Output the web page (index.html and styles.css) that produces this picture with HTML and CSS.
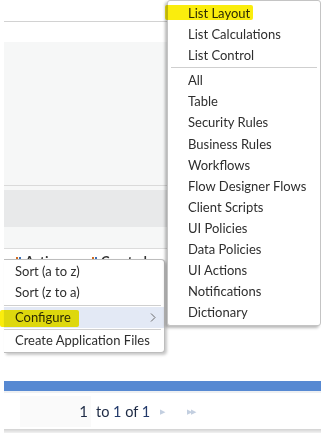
FILE: index.html
```html
<!DOCTYPE html>
<html>
<head>
<meta charset="utf-8">
<link rel="stylesheet" href="styles.css">
</head>
<body>
<div class="page">
  <div class="band top"></div>
  <div class="band gap"></div>
  <div class="band light tall"></div>
  <div class="band light thin"></div>
  <div class="band grey"></div>
  <div class="band light mid"></div>
  <div class="band heads">
    <span class="ico o"></span><span class="ico b"></span><span class="h1">Active</span>
    <span class="ico o2"></span><span class="ico b2"></span><span class="h2">Created</span>
  </div>
  <div class="band blank"></div>
  <div class="band blue"></div>
  <div class="footer">
    <div class="pagebox"><span class="cur">1</span></div>
    <span class="range">to <b>1</b> of <b>1</b></span>
    <span class="arr one">&#9654;</span>
    <span class="arr two">&#9654;&#9654;</span>
  </div>
  <div class="shadowline"></div>

  <ul class="menu ctx">
    <li>Sort (a to z)</li>
    <li>Sort (z to a)</li>
    <li class="sep"></li>
    <li class="active">Configure<svg class="chev" width="6" height="9" viewBox="0 0 6 9"><path d="M1 0.5 L5 4.5 L1 8.5" fill="none" stroke="#6b6b6b" stroke-width="1"/></svg></li>
    <li class="sep sep2"></li>
    <li>Create Application Files</li>
  </ul>

  <ul class="menu sub">
    <li>List Layout</li>
    <li>List Calculations</li>
    <li>List Control</li>
    <li class="sep"></li>
    <li>All</li>
    <li>Table</li>
    <li>Security Rules</li>
    <li>Business Rules</li>
    <li>Workflows</li>
    <li>Flow Designer Flows</li>
    <li>Client Scripts</li>
    <li>UI Policies</li>
    <li>Data Policies</li>
    <li>UI Actions</li>
    <li>Notifications</li>
    <li>Dictionary</li>
  </ul>

  <div class="mark m1"></div>
  <div class="mark m2"></div>
</div>
</body>
</html>
```

FILE: styles.css
```css
html, body {
  margin: 0;
  padding: 0;
  background: #fff;
}
body {
  width: 321px;
  height: 438px;
  overflow: hidden;
  font-family: Lato, "Open Sans", sans-serif;
  font-size: 13px;
  color: #2e2e2e;
}
.page {
  position: relative;
  height: 438px;
  margin-left: 4px;
  display: flex;
  flex-direction: column;
}
.band { flex: none; }
.top { height: 21px; border-bottom: 1px solid #d2d2d2; }
.gap { height: 20px; }
.light { background: #f6f7f7; }
.tall { height: 143px; border-bottom: 1px solid #dadada; }
.thin { height: 4px; }
.grey { height: 37px; background: #e8e9ea; }
.mid { height: 21px; border-bottom: 1px solid #dcdcdc; }
.heads {
  height: 10px;
  overflow: hidden;
  font-weight: bold;
  font-size: 13px;
  color: #333;
  display: flex;
  align-items: flex-start;
  padding-top: 4px;
  line-height: 16px;
  box-sizing: border-box;
}
.ico { display: inline-block; width: 2px; height: 4px; margin-top: 4px; }
.ico.o { background: #d06a1c; margin-left: 12px; }
.ico.b { background: #3d6fb6; margin-left: 1px; }
.h1 { margin-left: 4px; }
.ico.o2 { background: #d06a1c; margin-left: 30px; }
.ico.b2 { background: #3d6fb6; margin-left: 1px; }
.h2 { margin-left: 4px; }
.blank { height: 122px; }
.blue { height: 10px; background: #5789d2; border-bottom: 2px solid #eef0f2; }
.footer {
  height: 36px;
  display: flex;
  align-items: center;
  background: #fff;
}
.pagebox {
  width: 71px;
  height: 31px;
  margin-left: 16px;
  background: #fafafa;
  display: flex;
  align-items: center;
  justify-content: flex-end;
  padding-right: 3px;
  box-sizing: border-box;
}
.cur { font-size: 15px; color: #1d2a44; }
.range { margin-left: 5px; font-size: 14.5px; color: #1d2a44; }
.range b { font-weight: normal; color: #233a6b; }
.arr { color: #c3cfe0; font-size: 7px; }
.arr.one { margin-left: 10px; }
.arr.two { margin-left: 22px; letter-spacing: -1px; }
.shadowline {
  height: 4px;
  background: linear-gradient(#d2d2d2, #f2f2f2);
}

.menu {
  position: absolute;
  list-style: none;
  margin: 0;
  background: #fff;
  box-sizing: border-box;
}
.menu li {
  height: 21.1px;
  line-height: 21px;
  white-space: nowrap;
}
.menu li.sep {
  height: 1px;
  background: #cfcfcf;
  margin: 1px 3px 1px;
}
.ctx {
  left: 0;
  top: 259px;
  width: 161px;
  padding: 1px 0 1px;
  border: 1px solid #bdbdbd;
  border-left: none;
  border-radius: 0 4px 4px 0;
  box-shadow: 2px 2px 3px rgba(0,0,0,0.22);
}
.ctx li { height: 21px; padding-left: 11px; position: relative; }
.ctx li.sep { margin: 2px 3px 1px 0; padding: 0; height: 1px; }
.ctx li.sep2 { margin: 1px 3px 0 0; }
.ctx li.active { background: #e3e9f5; margin-top: 1px; }
.chev {
  position: absolute;
  right: 8px;
  top: 6px;
}
.sub {
  left: 163px;
  top: 0;
  width: 154px;
  padding: 2px 0 2px;
  border: 1px solid #c4c4c4;
  border-radius: 3px;
  box-shadow: -2px 2px 3px rgba(0,0,0,0.28);
}
.sub li { padding-left: 20px; }
.sub li.sep { margin: 1px 3px 2px 3px; padding: 0; }

.mark {
  position: absolute;
  background: rgba(250, 236, 0, 0.95);
  mix-blend-mode: multiply;
  border-radius: 2px;
}
.m1 { left: 161px; top: 5px; width: 88px; height: 15px; }
.m2 { left: -4px; top: 310px; width: 79px; height: 17px; }
```
